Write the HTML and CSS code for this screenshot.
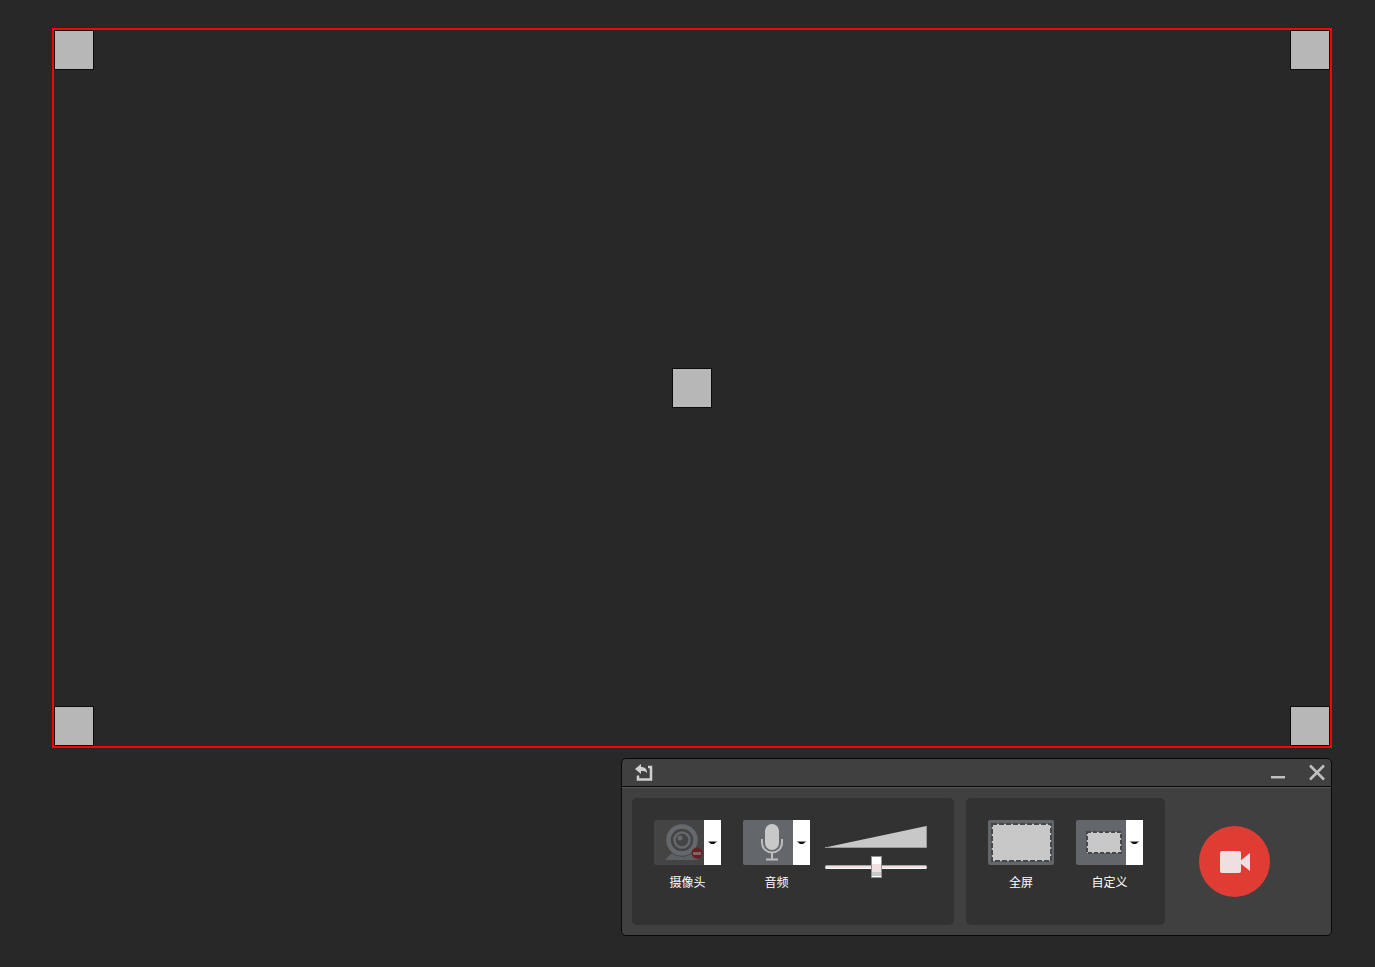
FILE: index.html
```html
<!DOCTYPE html>
<html lang="zh-CN">
<head>
    <meta charset="UTF-8">
    <meta name="viewport" content="width=device-width, initial-scale=1.0">
    <title>屏幕录制</title>
    <link rel="stylesheet" href="styles.css">
</head>

<body>

<!-- 录制区域 -->
<main class="capture">
    <span class="handle top-left"></span>
    <span class="handle top-right"></span>
    <span class="handle center"></span>
    <span class="handle bottom-left"></span>
    <span class="handle bottom-right"></span>
</main>

<!-- 控制面板 -->
<section class="recorder">
    <header class="titlebar">
        <button type="button" class="bar-btn" aria-label="返回">
            <svg width="18" height="18" viewBox="0 0 18 18">
                <path d="M0 5L6 0V3C10 3 12 5 12 9C10 7 9 7 6 7V10Z" fill="#d0d0d0"/>
                <path d="M13 3H16V15.500H3V11.500" fill="none" stroke="#d0d0d0" stroke-width="2.500"/>
            </svg>
        </button>
        <button type="button" class="bar-btn minimize" aria-label="最小化">
            <svg width="14" height="18" viewBox="0 0 14 18">
                <path d="M0 12H14V14H0Z" fill="#c0c0c0"/>
                <path d="M0 14H14V15H0Z" fill="#777b80"/>
            </svg>
        </button>
        <button type="button" class="bar-btn" aria-label="关闭">
            <svg width="16" height="18" viewBox="0 0 16 18">
                <path d="M1 1.500L15 15.500M15 1.500L1 15.500" stroke="#bfbfbf" stroke-width="2.500"/>
            </svg>
        </button>
    </header>

    <div class="panel">
        <div class="group sources">
            <div class="item">
                <div class="split">
                    <button type="button" class="tile off" aria-labelledby="camera">
                        <svg width="50" height="45" viewBox="0 0 50 45">
                            <path d="M18 33C24 38 33 38 38 33L44 40H11Z" fill="#5d6063"/>
                            <circle cx="28" cy="20" r="13.500" fill="none" stroke="#64686d" stroke-width="4.500"/>
                            <circle cx="28" cy="20" r="7.500" fill="none" stroke="#64686d" stroke-width="2.500"/>
                            <circle cx="26" cy="18" r="2.500" fill="#64686d"/>
                            <circle cx="43" cy="33" r="5.500" fill="#6a1f1f"/>
                            <path d="M39 32H47V35H39Z" fill="#77696b"/>
                        </svg>
                    </button>
                    <button type="button" class="arrow" aria-label="摄像头选项">
                        <svg width="9" height="4" viewBox="0 0 9 4"><path d="M0 0.500H9L6 3H3Z" fill="#111"/></svg>
                    </button>
                </div>
                <span class="caption" id="camera">摄像头</span>
            </div>

            <div class="item">
                <div class="split">
                    <button type="button" class="tile" aria-labelledby="audio">
                        <svg width="50" height="45" viewBox="0 0 50 45">
                            <rect x="22" y="4" width="14" height="26" rx="7" fill="#c8c8c8"/>
                            <path d="M19 19V22C19 36 39 36 39 22V19" fill="none" stroke="#bdbdbd" stroke-width="2"/>
                            <path d="M29 32V39M23 39.500H35" fill="none" stroke="#bdbdbd" stroke-width="2"/>
                        </svg>
                    </button>
                    <button type="button" class="arrow" aria-label="音频选项">
                        <svg width="9" height="4" viewBox="0 0 9 4"><path d="M0 0.500H9L6 3H3Z" fill="#111"/></svg>
                    </button>
                </div>
                <span class="caption" id="audio">音频</span>
            </div>

            <div class="volume">
                <svg width="102" height="24" viewBox="0 0 102 24">
                    <path d="M0 23.500L101.500 2V23.500Z" fill="#c8c8c8"/>
                    <path d="M101.500 2V23.500H0" fill="none" stroke="#999b9b"/>
                </svg>
                <input type="range" min="0" max="100" value="50" aria-label="音量">
            </div>
        </div>

        <div class="group">
            <div class="item">
                <div class="split">
                    <button type="button" class="tile full" aria-labelledby="full">
                        <svg width="66" height="45" viewBox="0 0 66 45">
                            <rect x="4" y="4" width="59" height="37" fill="#c8c8c8"/>
                            <rect x="4" y="4" width="59" height="37" fill="none" stroke="#45484b" stroke-width="2" stroke-dasharray="5 2"/>
                        </svg>
                    </button>
                </div>
                <span class="caption" id="full">全屏</span>
            </div>

            <div class="item">
                <div class="split">
                    <button type="button" class="tile" aria-labelledby="custom">
                        <svg width="50" height="45" viewBox="0 0 50 45">
                            <rect x="11" y="12" width="34" height="21" fill="#c8c8c8"/>
                            <rect x="11" y="12" width="34" height="21" fill="none" stroke="#45484b" stroke-width="2" stroke-dasharray="4 2"/>
                        </svg>
                    </button>
                    <button type="button" class="arrow" aria-label="自定义选项">
                        <svg width="9" height="4" viewBox="0 0 9 4"><path d="M0 0.500H9L6 3H3Z" fill="#111"/></svg>
                    </button>
                </div>
                <span class="caption" id="custom">自定义</span>
            </div>
        </div>

        <button type="button" class="record" aria-label="开始录制">
            <svg width="30" height="22" viewBox="0 0 30 22">
                <rect width="21" height="22" rx="2" fill="#f0dfe0"/>
                <path d="M20 10L30 2V20L20 12Z" fill="#f0dfe0"/>
            </svg>
        </button>
    </div>
</section>

</body>
</html>
```
FILE: styles.css
```css
* {
    box-sizing: border-box;
}
body {
    display: flex;
    flex-direction: column;
    gap: 10px;
    min-height: 100vh;
    margin: 0;
    padding: 28px 43px 31px 52px;
    background-color: #282828;
    color: #fff;
    font-family: "Liberation Sans", "Noto Sans CJK SC", sans-serif;
    font-size: 12px;
}
button {
    display: flex;
    align-items: center;
    justify-content: center;
    margin: 0;
    padding: 0;
    border: 0;
    background: none;
    cursor: pointer;
}
svg {
    display: block;
}

/* 录制区域 */
.capture {
    position: relative;
    flex: 1;
    min-height: 200px;
    border: 2px solid #f00;
}
.handle {
    position: absolute;
    width: 40px;
    height: 40px;
    border: 1px solid #0a0a0a;
    background-color: #b7b7b7;
}
.top-left {
    top: 0;
    left: 0;
}
.top-right {
    top: 0;
    right: 0;
}
.center {
    top: calc(50% - 20px);
    left: calc(50% - 20px);
}
.bottom-left {
    bottom: 0;
    left: 0;
}
.bottom-right {
    right: 0;
    bottom: 0;
}

/* 控制面板 */
.recorder {
    align-self: flex-end;
    border: 1px solid #080808;
    border-radius: 5px;
    background-color: #404040;
}
.titlebar {
    display: flex;
    align-items: center;
    gap: 24px;
    height: 28px;
    padding: 0 6px 0 13px;
    border-bottom: 1px solid #080808;
}
.minimize {
    margin-left: auto;
}
.panel {
    display: flex;
    align-items: center;
    padding: 10px 61px 10px 10px;
    border-top: 1px solid #555;
    border-radius: 0 0 4px 4px;
}
.group {
    display: flex;
    gap: 22px;
    height: 127px;
    margin-right: 12px;
    padding: 22px 22px 0;
    border-radius: 5px;
    background-color: #323232;
}
.sources {
    padding-right: 27px;
}
.item {
    display: flex;
    flex-direction: column;
    align-items: center;
    gap: 9px;
}
.split {
    display: flex;
}
.tile {
    height: 45px;
    border-radius: 2px 0 0 2px;
    background-color: #63676c;
}
.off {
    background-color: #444;
}
.full {
    border-radius: 2px;
}
.arrow {
    width: 17px;
    background-color: #fff;
}
.caption {
    line-height: 18px;
}
.volume {
    display: flex;
    flex-direction: column;
    gap: 8px;
    margin: 4px 0 0 -7px;
}
.volume input {
    -webkit-appearance: none;
    appearance: none;
    width: 102px;
    height: 22px;
    margin: 0;
    background: none;
}
.volume input::-webkit-slider-runnable-track {
    height: 4px;
    border-top: 1px solid #a5a5a5;
    border-bottom: 1px solid #fff;
    border-radius: 2px;
    background-color: #f2e0e1;
}
.volume input::-webkit-slider-thumb {
    -webkit-appearance: none;
    appearance: none;
    width: 11px;
    height: 22px;
    margin-top: -10px;
    border: 1px solid #8f9292;
    background: linear-gradient(#fff 7px, #f2e0e1 7px, #f2e0e1 15px, #c5c9c8 15px, #c5c9c8 19px, #fff 19px);
}
.record {
    width: 71px;
    height: 71px;
    margin-left: 22px;
    border-radius: 50%;
    background-color: #df3d34;
}
```
